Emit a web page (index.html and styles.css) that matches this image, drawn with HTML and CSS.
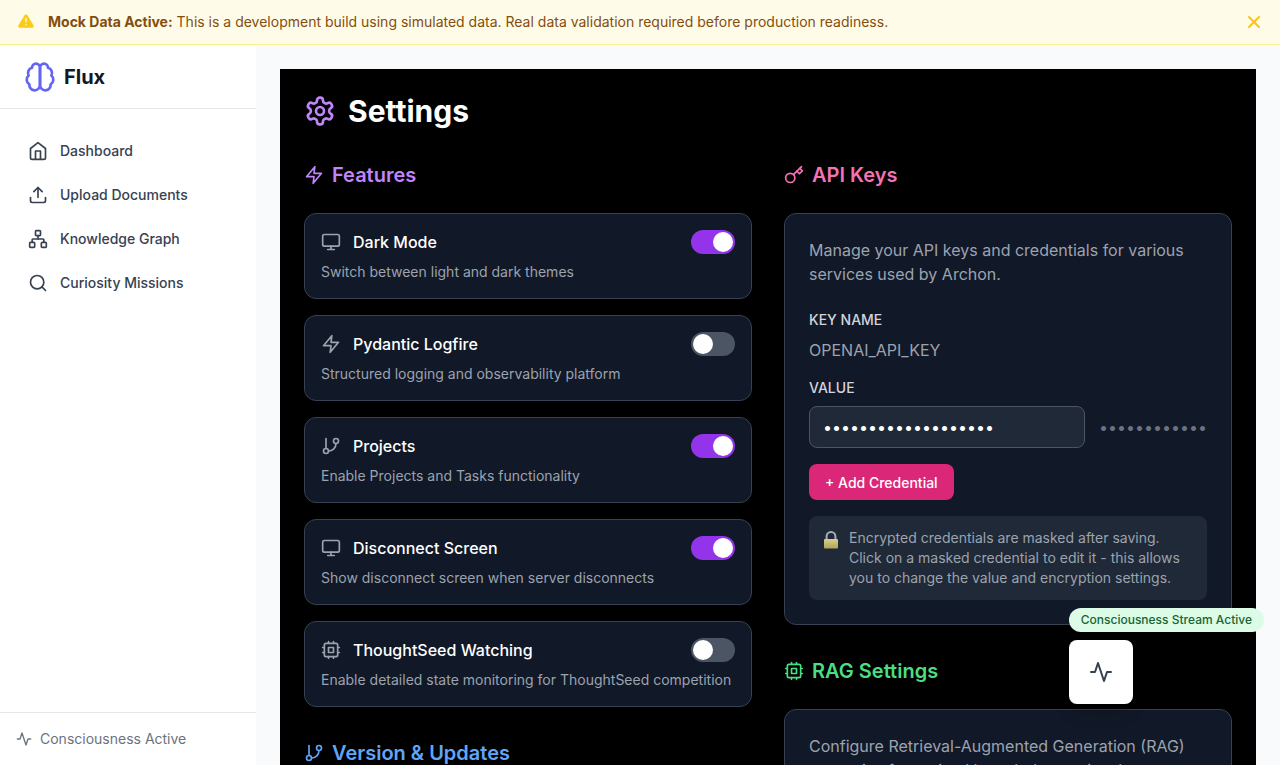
FILE: index.html
```html
<!DOCTYPE html>
<html lang="en">
<head>
    <meta charset="UTF-8">
    <meta name="viewport" content="width=device-width, initial-scale=1.0">
    <title>Flux - Settings</title>
    <link rel="stylesheet" href="styles.css">
</head>
<body>

    <!-- Shared icons -->
    <svg class="icon-defs" xmlns="http://www.w3.org/2000/svg">
        <symbol id="i-zap" viewBox="0 0 24 24"><polygon points="13 2 3 14 12 14 11 22 21 10 12 10 13 2"/></symbol>
        <symbol id="i-monitor" viewBox="0 0 24 24"><rect x="2" y="3" width="20" height="14" rx="2"/><path d="M8 21h8M12 17v4"/></symbol>
        <symbol id="i-branch" viewBox="0 0 24 24"><path d="M6 3v12"/><circle cx="18" cy="6" r="3"/><circle cx="6" cy="18" r="3"/><path d="M18 9a9 9 0 0 1-9 9"/></symbol>
        <symbol id="i-cpu" viewBox="0 0 24 24"><rect x="4" y="4" width="16" height="16" rx="2"/><rect x="9" y="9" width="6" height="6"/><path d="M15 2v2M15 20v2M2 15h2M2 9h2M20 15h2M20 9h2M9 2v2M9 20v2"/></symbol>
        <symbol id="i-activity" viewBox="0 0 24 24"><polyline points="22 12 18 12 15 21 9 3 6 12 2 12"/></symbol>
    </svg>

    <div class="banner">
        <svg class="banner-alert" viewBox="0 0 24 24"><path class="alert-body" d="M10.29 3.86 1.82 18a2 2 0 0 0 1.71 3h16.94a2 2 0 0 0 1.71-3L13.71 3.86a2 2 0 0 0-3.42 0z"/><path class="alert-mark" d="M12 9v4M12 17h.01"/></svg>
        <p class="banner-text"><strong>Mock Data Active:</strong> This is a development build using simulated data. Real data validation required before production readiness.</p>
        <svg class="icon banner-close" viewBox="0 0 24 24"><path d="M18 6 6 18M6 6l12 12"/></svg>
    </div>

    <div class="shell">
        <aside class="sidebar">
            <div class="brand">
                <svg class="icon brand-icon" viewBox="0 0 24 24"><path d="M12 5a3 3 0 1 0-5.997.125 4 4 0 0 0-2.526 5.77 4 4 0 0 0 .556 6.588A4 4 0 1 0 12 18Z"/><path d="M12 5a3 3 0 1 1 5.997.125 4 4 0 0 1 2.526 5.77 4 4 0 0 1-.556 6.588A4 4 0 1 1 12 18Z"/></svg>
                <span class="brand-name">Flux</span>
            </div>
            <nav class="side-nav">
                <a href="#dashboard">
                    <svg class="icon" viewBox="0 0 24 24"><path d="m3 9 9-7 9 7v11a2 2 0 0 1-2 2H5a2 2 0 0 1-2-2z"/><polyline points="9 22 9 12 15 12 15 22"/></svg>
                    Dashboard
                </a>
                <a href="#upload">
                    <svg class="icon" viewBox="0 0 24 24"><path d="M21 15v4a2 2 0 0 1-2 2H5a2 2 0 0 1-2-2v-4"/><polyline points="17 8 12 3 7 8"/><path d="M12 3v12"/></svg>
                    Upload Documents
                </a>
                <a href="#graph">
                    <svg class="icon" viewBox="0 0 24 24"><rect x="16" y="16" width="6" height="6" rx="1"/><rect x="2" y="16" width="6" height="6" rx="1"/><rect x="9" y="2" width="6" height="6" rx="1"/><path d="M5 16v-3a1 1 0 0 1 1-1h12a1 1 0 0 1 1 1v3"/><path d="M12 12V8"/></svg>
                    Knowledge Graph
                </a>
                <a href="#missions">
                    <svg class="icon" viewBox="0 0 24 24"><circle cx="11" cy="11" r="8"/><path d="m21 21-4.3-4.3"/></svg>
                    Curiosity Missions
                </a>
            </nav>
            <div class="side-footer">
                <svg class="icon"><use href="#i-activity"/></svg>
                Consciousness Active
            </div>
        </aside>

        <main class="main">
            <div class="panel">
                <h1 class="page-title">
                    <svg class="icon" viewBox="0 0 24 24"><path d="M12.22 2h-.44a2 2 0 0 0-2 2v.18a2 2 0 0 1-1 1.73l-.43.25a2 2 0 0 1-2 0l-.15-.08a2 2 0 0 0-2.73.73l-.22.38a2 2 0 0 0 .73 2.73l.15.1a2 2 0 0 1 1 1.72v.51a2 2 0 0 1-1 1.74l-.15.09a2 2 0 0 0-.73 2.73l.22.38a2 2 0 0 0 2.73.73l.15-.08a2 2 0 0 1 2 0l.43.25a2 2 0 0 1 1 1.73V20a2 2 0 0 0 2 2h.44a2 2 0 0 0 2-2v-.18a2 2 0 0 1 1-1.73l.43-.25a2 2 0 0 1 2 0l.15.08a2 2 0 0 0 2.73-.73l.22-.39a2 2 0 0 0-.73-2.73l-.15-.08a2 2 0 0 1-1-1.74v-.5a2 2 0 0 1 1-1.74l.15-.09a2 2 0 0 0 .73-2.73l-.22-.38a2 2 0 0 0-2.73-.73l-.15.08a2 2 0 0 1-2 0l-.43-.25a2 2 0 0 1-1-1.73V4a2 2 0 0 0-2-2z"/><circle cx="12" cy="12" r="3"/></svg>
                    Settings
                </h1>

                <div class="columns">
                    <div class="column">
                        <h2 class="section-title purple"><svg class="icon"><use href="#i-zap"/></svg>Features</h2>

                        <div class="feature">
                            <div class="feature-head">
                                <svg class="icon"><use href="#i-monitor"/></svg>
                                <span class="feature-name">Dark Mode</span>
                                <span class="toggle on"></span>
                            </div>
                            <p class="feature-desc">Switch between light and dark themes</p>
                        </div>
                        <div class="feature">
                            <div class="feature-head">
                                <svg class="icon"><use href="#i-zap"/></svg>
                                <span class="feature-name">Pydantic Logfire</span>
                                <span class="toggle"></span>
                            </div>
                            <p class="feature-desc">Structured logging and observability platform</p>
                        </div>
                        <div class="feature">
                            <div class="feature-head">
                                <svg class="icon"><use href="#i-branch"/></svg>
                                <span class="feature-name">Projects</span>
                                <span class="toggle on"></span>
                            </div>
                            <p class="feature-desc">Enable Projects and Tasks functionality</p>
                        </div>
                        <div class="feature">
                            <div class="feature-head">
                                <svg class="icon"><use href="#i-monitor"/></svg>
                                <span class="feature-name">Disconnect Screen</span>
                                <span class="toggle on"></span>
                            </div>
                            <p class="feature-desc">Show disconnect screen when server disconnects</p>
                        </div>
                        <div class="feature">
                            <div class="feature-head">
                                <svg class="icon"><use href="#i-cpu"/></svg>
                                <span class="feature-name">ThoughtSeed Watching</span>
                                <span class="toggle"></span>
                            </div>
                            <p class="feature-desc">Enable detailed state monitoring for ThoughtSeed competition</p>
                        </div>

                        <h2 class="section-title blue next"><svg class="icon"><use href="#i-branch"/></svg>Version &amp; Updates</h2>
                    </div>

                    <div class="column">
                        <h2 class="section-title pink"><svg class="icon" viewBox="0 0 24 24"><circle cx="7.5" cy="15.5" r="5.5"/><path d="m21 2-9.6 9.6"/><path d="m15.5 7.5 3 3L22 7l-3-3"/></svg>API Keys</h2>

                        <div class="card">
                            <p class="card-intro">Manage your API keys and credentials for various services used by Archon.</p>
                            <div class="field-label first">Key Name</div>
                            <div class="key-name">OPENAI_API_KEY</div>
                            <div class="field-label">Value</div>
                            <div class="value-row">
                                <input class="value-input" type="password" value="abcdefghijklmnopqrs">
                                <span class="masked">••••••••••••</span>
                            </div>
                            <button class="add-btn">+ Add Credential</button>
                            <div class="note">
                                <svg class="note-lock" viewBox="0 0 16 18">
                                    <defs>
                                        <linearGradient id="lockGold" x1="0" y1="0" x2="0" y2="1">
                                            <stop offset="0" stop-color="#d8cf8c"/>
                                            <stop offset="1" stop-color="#b3a458"/>
                                        </linearGradient>
                                    </defs>
                                    <path class="lock-shackle" d="M3.6 9V5.4a4.4 4.4 0 0 1 8.8 0V9"/>
                                    <rect class="lock-body" x="1" y="8" width="14" height="9.5" rx="1"/>
                                </svg>
                                <p>Encrypted credentials are masked after saving. Click on a masked credential to edit it - this allows you to change the value and encryption settings.</p>
                            </div>
                        </div>

                        <h2 class="section-title green next"><svg class="icon"><use href="#i-cpu"/></svg>RAG Settings</h2>

                        <div class="card">
                            <p class="card-intro">Configure Retrieval-Augmented Generation (RAG) strategies for optimal knowledge retrieval.</p>
                        </div>
                    </div>
                </div>
            </div>
        </main>
    </div>

    <!-- Floating status button -->
    <div class="stream">
        <span class="stream-pill">Consciousness Stream Active</span>
        <button class="stream-btn"><svg class="icon"><use href="#i-activity"/></svg></button>
    </div>

</body>
</html>
```

FILE: styles.css
```css
* {
    margin: 0;
    padding: 0;
    box-sizing: border-box;
}

html, body {
    height: 100%;
    overflow: hidden;
}

body {
    font-family: Inter, "Noto Sans", sans-serif;
    background-color: #f9fafb;
    display: flex;
    flex-direction: column;
}

.icon-defs {
    display: none;
}

.icon {
    width: 20px;
    height: 20px;
    flex-shrink: 0;
    fill: none;
    stroke: currentColor;
    stroke-width: 2;
    stroke-linecap: round;
    stroke-linejoin: round;
}

/* Mock data banner */
.banner {
    height: 45px;
    flex-shrink: 0;
    display: flex;
    align-items: center;
    padding: 0 16px;
    background-color: #fefce8;
    border-bottom: 1px solid #fef08a;
}

.banner-alert {
    width: 18px;
    height: 18px;
    margin: -3px 13px 0 1px;
    flex-shrink: 0;
}

.alert-body {
    fill: #facc15;
}

.alert-mark {
    fill: none;
    stroke: #fefce8;
    stroke-width: 2;
    stroke-linecap: round;
}

.banner-text {
    flex: 1;
    font-size: 14px;
    line-height: 20px;
    color: #854d0e;
}

.banner-text strong {
    font-weight: 700;
}

.banner-close {
    color: #fcc419;
    stroke-width: 2.5;
}

/* Sidebar */
.shell {
    flex: 1;
    display: flex;
    min-height: 0;
}

.sidebar {
    width: 256px;
    flex-shrink: 0;
    background-color: #fff;
    display: flex;
    flex-direction: column;
}

.brand {
    height: 64px;
    display: flex;
    align-items: center;
    gap: 8px;
    padding: 0 24px;
    border-bottom: 1px solid #e5e7eb;
}

.brand-icon {
    width: 32px;
    height: 32px;
    color: #6366f1;
}

.brand-name {
    font-size: 20px;
    font-weight: 700;
    color: #111827;
}

.side-nav {
    flex: 1;
    padding: 20px 16px;
}

.side-nav a {
    display: flex;
    align-items: center;
    gap: 12px;
    padding: 12px;
    font-size: 14px;
    line-height: 20px;
    font-weight: 500;
    color: #374151;
    text-decoration: none;
}

.side-footer {
    display: flex;
    align-items: center;
    gap: 8px;
    padding: 16px;
    font-size: 14px;
    line-height: 20px;
    color: #6b7280;
    border-top: 1px solid #e5e7eb;
}

.side-footer .icon {
    width: 16px;
    height: 16px;
}

/* Main panel */
.main {
    flex: 1;
    min-width: 0;
    padding: 24px;
}

.panel {
    background-color: #000;
    padding: 24px;
}

.page-title {
    display: flex;
    align-items: center;
    gap: 12px;
    font-size: 30px;
    line-height: 36px;
    font-weight: 700;
    color: #fff;
    margin-bottom: 32px;
}

.page-title .icon {
    width: 32px;
    height: 32px;
    color: #c084fc;
}

.columns {
    display: grid;
    grid-template-columns: minmax(0, 1fr) minmax(0, 1fr);
    gap: 32px;
    align-items: start;
}

.section-title {
    display: flex;
    align-items: center;
    gap: 8px;
    font-size: 20px;
    line-height: 28px;
    font-weight: 600;
    margin-bottom: 24px;
}

.section-title.next {
    margin-top: 32px;
}

.purple { color: #c084fc; }
.pink { color: #f472b6; }
.blue { color: #60a5fa; }
.green { color: #4ade80; }

/* Feature cards */
.feature {
    background-color: #111827;
    border: 1px solid #374151;
    border-radius: 12px;
    padding: 16px;
    margin-bottom: 16px;
}

.feature:last-of-type {
    margin-bottom: 0;
}

.feature-head {
    display: flex;
    align-items: center;
    gap: 12px;
    color: #9ca3af;
}

.feature-name {
    flex: 1;
    font-size: 16px;
    line-height: 24px;
    font-weight: 500;
    color: #fff;
}

.feature-desc {
    margin-top: 8px;
    font-size: 14px;
    line-height: 20px;
    color: #9ca3af;
}

.toggle {
    width: 44px;
    height: 24px;
    border-radius: 12px;
    background-color: #4b5563;
    display: flex;
    align-items: center;
    padding: 0 2px;
}

.toggle::after {
    content: "";
    width: 20px;
    height: 20px;
    border-radius: 50%;
    background-color: #fff;
}

.toggle.on {
    background-color: #9333ea;
    justify-content: flex-end;
}

/* API keys card */
.card {
    background-color: #111827;
    border: 1px solid #374151;
    border-radius: 12px;
    padding: 24px;
}

.card-intro {
    font-size: 16px;
    line-height: 24px;
    color: #9ca3af;
}

.field-label {
    margin-top: 16px;
    font-size: 14px;
    line-height: 20px;
    font-weight: 500;
    color: #d1d5db;
    text-transform: uppercase;
}

.field-label.first {
    margin-top: 24px;
}

.key-name {
    margin-top: 8px;
    font-size: 16px;
    line-height: 24px;
    color: #9ca3af;
}

.value-row {
    margin-top: 8px;
    display: flex;
    align-items: center;
    gap: 14px;
}

.value-input {
    width: 278px;
    height: 42px;
    padding: 0 13px;
    font-family: inherit;
    font-size: 16px;
    color: #fff;
    background-color: #1f2937;
    border: 1px solid #4b5563;
    border-radius: 8px;
    outline: none;
}

.masked {
    font-size: 16px;
    color: #6b7280;
    white-space: nowrap;
}

.add-btn {
    display: block;
    margin-top: 16px;
    height: 36px;
    padding: 0 16px;
    font-family: inherit;
    font-size: 14px;
    font-weight: 500;
    color: #fff;
    background-color: #db2777;
    border: none;
    border-radius: 8px;
}

.note {
    margin-top: 16px;
    display: flex;
    gap: 10px;
    padding: 12px 14px;
    background-color: #1f2937;
    border-radius: 8px;
    font-size: 14px;
    line-height: 20px;
    color: #9ca3af;
}

.note-lock {
    width: 16px;
    height: 18px;
    margin-top: 3px;
    flex-shrink: 0;
}

.lock-shackle {
    fill: none;
    stroke: #a8adb5;
    stroke-width: 2;
}

.lock-body {
    fill: url(#lockGold);
}

/* Floating stream status */
.stream {
    position: fixed;
    right: 16px;
    bottom: 61px;
    display: flex;
    flex-direction: column;
    align-items: flex-start;
    gap: 8px;
}

.stream-pill {
    padding: 4px 12px;
    font-size: 12px;
    line-height: 16px;
    font-weight: 500;
    color: #166534;
    background-color: #dcfce7;
    border-radius: 12px;
}

.stream-btn {
    width: 64px;
    height: 64px;
    display: flex;
    align-items: center;
    justify-content: center;
    color: #374151;
    background-color: #fff;
    border: none;
    border-radius: 8px;
    box-shadow: 0 10px 15px rgba(0, 0, 0, 0.1);
}

.stream-btn .icon {
    width: 24px;
    height: 24px;
}
```
